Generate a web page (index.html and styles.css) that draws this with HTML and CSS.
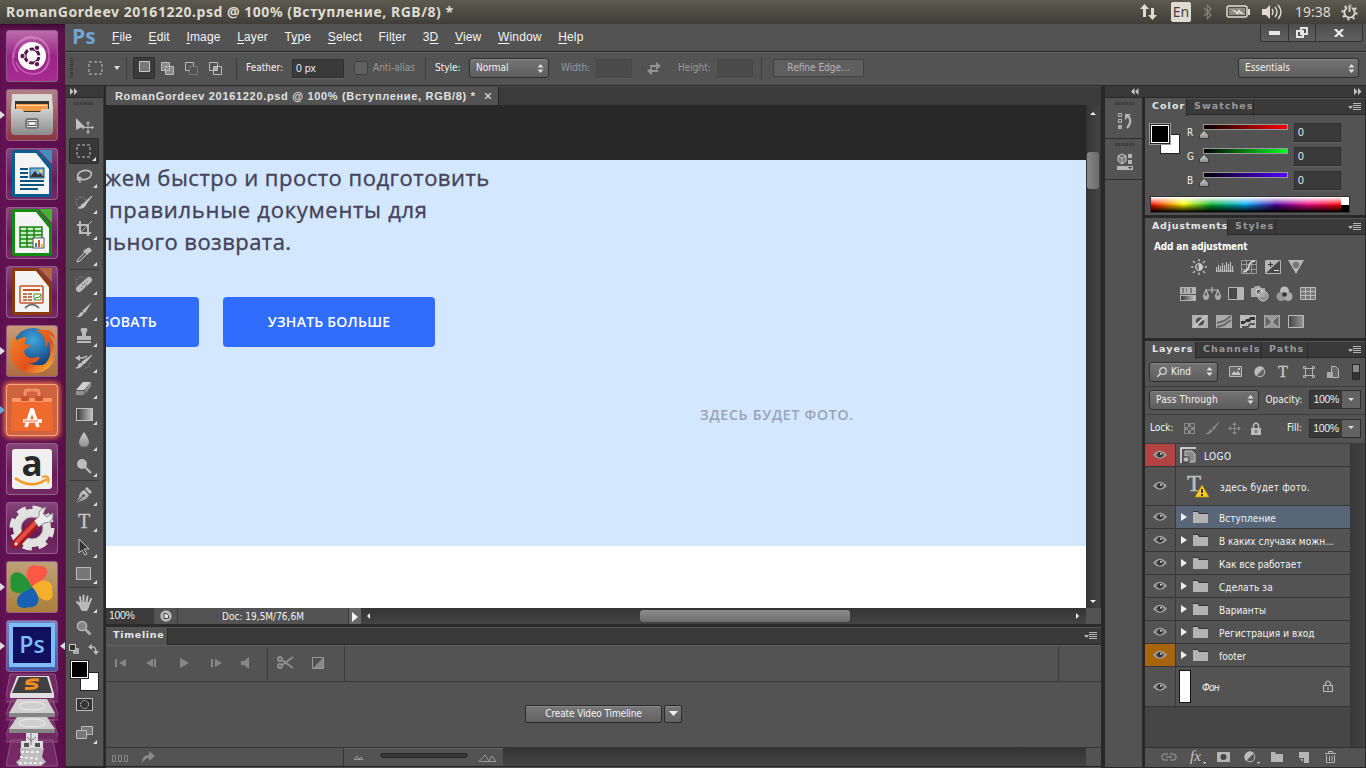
FILE: index.html
```html
<!DOCTYPE html>
<html lang="en">
<head>
<meta charset="utf-8">
<title>RomanGordeev 20161220.psd</title>
<link rel="stylesheet" href="styles.css">
</head>
<body>
<svg width="0" height="0" class="defs">
  <defs>
    <linearGradient id="metal" x1="0" y1="0" x2="0" y2="1"><stop offset="0" stop-color="#d0d0d0"/><stop offset="1" stop-color="#8c8c8c"/></linearGradient>
    <linearGradient id="fade" x1="0" y1="0" x2="1" y2="0"><stop offset="0" stop-color="#3a3a3a"/><stop offset="1" stop-color="#c4c4c4"/></linearGradient>
    <linearGradient id="fadeout" x1="0" y1="0" x2="1" y2="0"><stop offset="0" stop-color="#444"/><stop offset="1" stop-color="#999"/></linearGradient>
    <linearGradient id="fox" x1="0" y1="0" x2="1" y2="1"><stop offset="0" stop-color="#f58a25"/><stop offset=".6" stop-color="#e2501c"/><stop offset="1" stop-color="#ffd53a"/></linearGradient>
    <radialGradient id="globe" cx=".5" cy=".3" r=".7"><stop offset="0" stop-color="#3fa7dd"/><stop offset="1" stop-color="#123a78"/></radialGradient>
    <symbol id="eye" viewBox="0 0 14 10"><path d="M1 5Q7-2 13 5Q7 11 1 5Z" fill="#6b6b6b" stroke="#a5a5a5" stroke-width="1.3"/><circle cx="7" cy="4.8" r="2.7" fill="#343434"/><circle cx="8" cy="3.8" r="1" fill="#ddd"/></symbol>
    <symbol id="folder" viewBox="0 0 15 12"><path d="M0 1h5l1 2h9v9H0z" fill="#b3b3b3"/><path d="M0 .5h5l1 2h9" fill="none" stroke="#333"/></symbol>
    <symbol id="updown" viewBox="0 0 7 9"><path d="M3.500 0L6.500 3.500H.5zM3.500 9L.5 5.500h6z" fill="#dedede"/></symbol>
    <symbol id="flyout" viewBox="0 0 13 9"><path d="M0 3h5L2.500 6z" fill="#bbb"/><path d="M5 .5h8M5 2.500h8M5 4.500h8M5 6.500h8" stroke="#b5b5b5"/></symbol>
    <symbol id="thumb" viewBox="0 0 10 9"><path d="M5 .5L9.500 5v3.500H.5V5z" fill="url(#metal)" stroke="#303030" stroke-width=".8"/></symbol>
  </defs>
</svg>

<header class="topbar">
  <h1 class="topbar-title">RomanGordeev 20161220.psd @ 100% (Вступление, RGB/8) *</h1>
  <svg class="ind ind-net" width="17" height="16" viewBox="0 0 17 16"><path d="M4.500 0L9 5H6v8H3V5H0zM12.500 16L8 11h3V4h3v7h3z" fill="#dfdbd2"/></svg>
  <span class="lang">En</span>
  <svg class="ind-bt" width="9" height="16" viewBox="0 0 9 16"><path d="M1 4l7 7-3.500 3.500v-13L8 5 1 12" fill="none" stroke="#85827a" stroke-width="1.200"/></svg>
  <svg class="ind-bat" width="25" height="14" viewBox="0 0 25 14"><rect x="1" y="1" width="20" height="11" rx="2" fill="none" stroke="#dfdbd2" stroke-width="1.500"/><rect x="3" y="3" width="16" height="7" fill="#8d8a82"/><path d="M22 4h2v6h-2zM5 4l7 3V4l7 6-7-2v2z" fill="#dfdbd2"/></svg>
  <svg class="ind-vol" width="21" height="16" viewBox="0 0 21 16"><path d="M0 5h4l4-4v14l-4-4H0z" fill="#dfdbd2"/><path d="M10 5q2 3 0 6M13 3q4 5 0 10M16 1q6 7 0 14" fill="none" stroke="#dfdbd2" stroke-width="1.400"/></svg>
  <time class="clock">19:38</time>
  <svg width="17" height="17" viewBox="0 0 17 17"><circle cx="8.500" cy="8.500" r="5.200" fill="none" stroke="#dfdbd2" stroke-width="1.800"/><circle cx="8.500" cy="8.500" r="7" fill="none" stroke="#dfdbd2" stroke-width="2" stroke-dasharray="2.200 3.300"/><path d="M6.500 1h4v7h-4z" fill="#4b4942"/><path d="M8.500 1v7" stroke="#dfdbd2" stroke-width="1.800"/></svg>
</header>

<div class="desktop">
<nav class="launcher">
  <div class="tile t-ubuntu"><svg width="52" height="52" viewBox="0 0 52 52"><g fill="none" stroke="#e8a8db" stroke-opacity=".45" stroke-width="1.500"><path d="M8 28C6 4 34 0 43 20M18 8C42 0 52 30 34 43M42 20C50 46 18 52 10 32M12 42C-2 26 14 4 30 9"/></g><circle cx="26" cy="26" r="14" fill="#fff"/><circle cx="26" cy="26" r="7" fill="none" stroke="#5b1650" stroke-width="3" stroke-dasharray="12.700 2" stroke-dashoffset="-1"/><g fill="#5b1650" stroke="#fff"><circle cx="16.500" cy="26" r="2.700"/><circle cx="31" cy="17.800" r="2.700"/><circle cx="31" cy="34.200" r="2.700"/></g></svg></div>
  <div class="tile t-files"><span class="run run-on"></span><svg width="52" height="52" viewBox="0 0 52 52"><path d="M6 5h40l1 16H5z" fill="#d9d9d6"/><path d="M9 12h34v11H9z" fill="#353535"/><path d="M10 15h32v7H10z" fill="#f59a45"/><path d="M10 16.500h31" stroke="#ffd9a4"/><path d="M5 20h11l2 3h16l2-3h11v22q0 4-4 4H9q-4 0-4-4z" fill="url(#metal)"/><rect x="20" y="30" width="12" height="9" rx="2" fill="#eee" stroke="#777" stroke-width="2"/><rect x="22" y="32.500" width="8" height="4" fill="none" stroke="#555"/></svg></div>
  <div class="tile"><svg width="52" height="52" viewBox="0 0 52 52"><path d="M6 4q0-2 3-2h22l15 16v28q0 3-3 3H9q-3 0-3-3z" fill="#075f91"/><path d="M33 2h13v14z" fill="#3f91bf"/><path d="M9 5h21l13 16v25H9z" fill="#f4f4f4"/><path d="M14 21h8M14 25h8M14 29h8M14 33h24M14 37h24M14 41h18" stroke="#07567f" stroke-width="2"/><rect x="24" y="20" width="14" height="10" fill="#7fb3d3" stroke="#07567f"/><path d="M24 29l5-6 3 4 2-2 4 4z" fill="#333"/><circle cx="35" cy="23" r="1.500" fill="#ffe14f"/></svg></div>
  <div class="tile"><svg width="52" height="52" viewBox="0 0 52 52"><path d="M6 4q0-2 3-2h22l15 16v28q0 3-3 3H9q-3 0-3-3z" fill="#148b12"/><path d="M33 2h13v14z" fill="#43b430"/><path d="M9 5h21l13 16v25H9z" fill="#f4f4f4"/><path d="M14 20h22v20H14z" fill="#c8efbd"/><path d="M14 20h22v20H14zM14 24h22M14 28h22M14 32h22M14 36h22M21 20v20M28 20v20" fill="none" stroke="#168216" stroke-width="1.500"/><rect x="27" y="31" width="11" height="10" fill="#fff" stroke="#555"/><path d="M29 40v-4h2v4z" fill="#2785c8"/><path d="M32 40v-7h2v7z" fill="#dd5321"/><path d="M35 40v-3h2v3z" fill="#edbb23"/></svg></div>
  <div class="tile"><svg width="52" height="52" viewBox="0 0 52 52"><path d="M6 4q0-2 3-2h22l15 16v28q0 3-3 3H9q-3 0-3-3z" fill="#8b3a08"/><path d="M33 2h13v14z" fill="#b4663c"/><path d="M9 5h21l13 16v25H9z" fill="#f4f4f4"/><rect x="14" y="20" width="23" height="17" rx="1" fill="#fff7ef" stroke="#bf5420" stroke-width="1.500"/><path d="M17 24h17" stroke="#bf5420" stroke-width="2"/><path d="M17 28h4M17 31h4M17 34h4M22 28h4M22 31h4M22 34h4" stroke="#a34c28" stroke-width="1.500"/><path d="M28 28h7v6h-7zM29 33l2-2 1 1 3-3" fill="none" stroke="#3e8e40"/><path d="M26 37v2M19 42q7-7 14 0" fill="none" stroke="#777" stroke-width="2"/></svg></div>
  <div class="tile t-fox"><span class="run run-on"></span><svg width="52" height="52" viewBox="0 0 52 52"><circle cx="27" cy="23" r="20" fill="url(#globe)"/><path d="M30 5q11 5 9 18 4-4 3-8 6 15-3 24 14-6 10-21 2 30-22 30C12 48 2 36 5 23q0-8 4-13 0 3 2 5 4-3 9-3 0 5-2 7l7 1-7 6q1 7 8 7 5-1 8-1-3 7-12 6 18 7 25-7 4-12-5-22 5 2 7 6 0-6-6-10z" fill="url(#fox)"/></svg></div>
  <div class="tile t-store"><span class="run run-on hollow"></span><svg width="52" height="52" viewBox="0 0 52 52"><path d="M19 17V9q0-3 3-3h8q3 0 3 3v8" fill="none" stroke="#f59068" stroke-width="3"/><path d="M6 14h40l1 33H5z" fill="#ef6a2c"/><path d="M6 14h40v4H6z" fill="#f79865"/><path d="M15 12h8v5h-8zM29 12h8v5h-8z" fill="#c9532f"/><path d="M20 43l5.500-17h1L32 43M17 37h19" fill="none" stroke="#fff" stroke-width="3.500"/><path d="M18 37h14" stroke="#ef6a2c"/></svg></div>
  <div class="tile"><svg width="52" height="52" viewBox="0 0 52 52"><rect x="6" y="6" width="40" height="40" rx="3" fill="#f0f0ef"/><text x="26" y="33" text-anchor="middle" font-family="Open Sans, sans-serif" font-weight="700" font-size="35" fill="#282828">a</text><path d="M9 35q16 12 32 1" fill="none" stroke="#f79a21" stroke-width="2.500"/><path d="M36 34q8-3 6 6" fill="none" stroke="#f79a21" stroke-width="2"/></svg></div>
  <div class="tile"><svg width="52" height="52" viewBox="0 0 52 52"><circle cx="26" cy="26" r="20" fill="none" stroke="#e1e1df" stroke-width="5" stroke-dasharray="9 6.700"/><circle cx="26" cy="26" r="15" fill="none" stroke="#e1e1df" stroke-width="8"/><circle cx="26" cy="26" r="11" fill="none" stroke="#b5b5b3"/><path d="M10 42L31 20" stroke="#a51b1b" stroke-width="9" stroke-linecap="round"/><path d="M11 40L30 20" stroke="#e34d48" stroke-width="4" stroke-linecap="round"/><circle cx="10" cy="42" r="1.500" fill="#fff"/><path d="M28 19l5-5q-1-7 7-9l-3 7 4 3 6-4q1 10-9 10l-5 4z" fill="#ededed" stroke="#8b8b8b"/></svg></div>
  <div class="tile t-clover"><span class="run run-on"></span><svg width="52" height="52" viewBox="0 0 52 52"><path d="M26 26C16 15 22 1 31 5c13-2 16 11-5 21z" fill="#ff5845"/><path d="M26 26c12-12 22-5 20 3 4 13-11 16-20-3z" fill="#f4b02b"/><path d="M26 26c12 12 5 22-3 20-13 5-20-11 3-20z" fill="#1860b4"/><path d="M26 26C14 37 2 31 5 23 1 11 15 3 26 26z" fill="#259437"/></svg></div>
  <div class="tile t-ps"><span class="run run-on"></span><span class="run run-focus"></span><span class="psbox">Ps</span></div>
  <svg class="stack" width="52" height="94" viewBox="0 0 52 94"><g fill="#b673a8" fill-opacity=".25" stroke="#9b6e91" stroke-opacity=".7"><path d="M4 1h45l5 28H-1zM5 27h42l7 20H-2zM5 47h42l7 22H-2zM5 67h42l5 26H0z"/></g><path d="M11 3h32l5 18v4H4v-4z" fill="#dfdfdf"/><path d="M13 4h28l5 16H6z" fill="#404040"/><path d="M33 7q-13-1-12 3.500 10 0 10 2.500-1 3-12 2.500" fill="none" stroke="#f88c20" stroke-width="3"/><path d="M11 26h30l8 14v3H3v-3zM11 44h30l8 12v3H3v-3z" fill="#cfcfcf"/><path d="M3 40h46v4H3zM3 56h46v4H3z" fill="#858585"/><ellipse cx="26" cy="33" rx="13" ry="4" fill="none" stroke="#eee"/><ellipse cx="26" cy="50" rx="13" ry="4" fill="none" stroke="#eee"/><path d="M20 60h12v8h5v7H15v-7h5z" fill="#ddd"/><path d="M25 60v12m-4-8 4 4 5-4" fill="none" stroke="#777"/><path d="M18 70h5v4h-5zM29 70h5v4h-5z" fill="#555"/><path d="M14 75h24l-2 9 4 5-5 4H13l-3-4 5-4z" fill="#bebebe"/><path d="M15 79h20M14 84l20 2M13 90h25" stroke="#eee" stroke-width="2" stroke-dasharray="3 2"/></svg>
</nav>

<main class="app">
  <div class="menubar">
    <span class="pslogo">Ps</span>
    <nav class="menus"><span><u>F</u>ile</span><span><u>E</u>dit</span><span><u>I</u>mage</span><span><u>L</u>ayer</span><span>T<u>y</u>pe</span><span><u>S</u>elect</span><span>Fil<u>t</u>er</span><span>3<u>D</u></span><span><u>V</u>iew</span><span><u>W</u>indow</span><span><u>H</u>elp</span></nav>
    <div class="winbtns">
      <span class="wb wb1"><svg width="11" height="4"><path d="M0 0h11v4H0z" fill="#e6e6e6"/></svg></span>
      <span class="wb wb2"><svg width="12" height="11" viewBox="0 0 12 11"><path d="M5 1h6v6H5zM1 4h6v6H1z" fill="#535353" stroke="#e6e6e6" stroke-width="2"/></svg></span>
      <span class="wb wb3"><svg width="10" height="8" viewBox="0 0 10 8"><path d="M1 0l8 8M9 0L1 8" stroke="#e6e6e6" stroke-width="2.400"/></svg></span>
    </div>
  </div>

  <div class="options">
    <span class="vgrip"></span>
    <svg class="o-marq" width="16" height="14" viewBox="0 0 16 14"><rect x="1" y="1" width="13" height="12" fill="none" stroke="#c2c2c2" stroke-dasharray="3 2"/></svg>
    <svg class="o-caret" width="6" height="4"><path d="M0 0h6L3 4z" fill="#ddd"/></svg>
    <span class="vsep o-s1"></span>
    <span class="modebox"><svg width="11" height="11"><path d="M.5.5h10v10H.5z" fill="#777" stroke="#c9c9c9"/></svg></span>
    <svg class="o-mode m1" width="13" height="13"><path d="M.5.5h8v8h-8zM4.500 4.500h8v8h-8z" fill="#888" stroke="#bcbcbc"/></svg>
    <svg class="o-mode m2" width="13" height="13"><path d="M.5.5h8v8h-8z" fill="none" stroke="#bcbcbc"/><path d="M4.500 4.500h8v8h-8z" fill="#535353" stroke="#777"/></svg>
    <svg class="o-mode m3" width="13" height="13"><path d="M.5.5h8v8h-8zM4.500 4.500h8v8h-8z" fill="none" stroke="#bcbcbc"/><path d="M5 5h3v3H5z" fill="#aaa"/></svg>
    <span class="vsep o-s2"></span>
    <label class="ui o-feather">Feather:</label><span class="field o-f1">0 px</span>
    <span class="check"></span><span class="ui dim o-anti">Anti-alias</span>
    <span class="vsep o-s3"></span>
    <span class="ui o-style">Style:</span>
    <span class="select o-normal">Normal<svg width="7" height="9"><use href="#updown"/></svg></span>
    <span class="ui dim o-w">Width:</span><span class="field off"></span>
    <svg class="o-swap" width="14" height="13" viewBox="0 0 14 13"><path d="M3 3h6V0l5 4-5 4V5H3zM11 8H5V5L0 9l5 4v-3h6z" fill="#929292"/></svg>
    <span class="ui dim o-h">Height:</span><span class="field off"></span>
    <span class="vsep o-s4"></span>
    <span class="button disabled">Refine Edge...</span>
    <span class="select o-ess">Essentials<svg width="7" height="9"><use href="#updown"/></svg></span>
  </div>

  <div class="work">
    <aside class="tools">
      <div class="toolhead"><svg width="8" height="7"><path d="M0 0l3.500 3.500L0 7zM4 0l3.500 3.500L4 7z" fill="#c5c5c5"/></svg></div>
      <div class="grip"><i></i></div>
      <div class="tool nomark"><svg width="20" height="18" viewBox="0 0 20 18"><path d="M2 2l9 9-4 .5L2 14z" fill="#c0c0c0"/><path d="M14 6.500v10M9 11.500h10" stroke="#bbb"/><path d="M14 5l-2 2.500h4zM14 18l-2-2.500h4zM7.500 11.500l2.500-2v4zM20 11.500l-2.500-2v4z" fill="#bbb"/></svg></div>
      <div class="tool active"><svg width="16" height="14"><rect x="1" y="1" width="13" height="12" fill="none" stroke="#c2c2c2" stroke-dasharray="3 2"/></svg></div>
      <div class="tool"><svg width="18" height="16" viewBox="0 0 18 16"><ellipse cx="9.500" cy="6" rx="7" ry="4.500" transform="rotate(-12 9.500 6)" fill="none" stroke="#bbb" stroke-width="1.800"/><path d="M3 8q-2 3 1 3t2-2q-2-2-3 1 2 0 2 4" fill="none" stroke="#bbb" stroke-width="1.300"/></svg></div>
      <div class="tool"><svg width="18" height="16" viewBox="0 0 18 16"><circle cx="6" cy="7" r="5" fill="none" stroke="#aaa" stroke-dasharray="1 1.500"/><path d="M17 1l-6 8-2-1zM11 9q-1 5-8 4 4-1 4-4z" fill="#c3c3c3" stroke="#c3c3c3"/></svg></div>
      <div class="tool"><svg width="17" height="17" viewBox="0 0 17 17"><path d="M4 0v12h11M1 4h11v11" fill="none" stroke="#bbb" stroke-width="2"/><path d="M5 11L16 0" stroke="#bbb"/></svg></div>
      <div class="tool"><svg width="16" height="16" viewBox="0 0 16 16"><path d="M10 2q3-3 5 0t-2 4l-2 2-4-4z" fill="#bbb"/><path d="M9 5L2 12l-1 3 3-1 7-7z" fill="#666" stroke="#c5c5c5"/></svg></div>
      <hr>
      <div class="tool"><svg width="18" height="17" viewBox="0 0 18 17"><circle cx="6" cy="6" r="5" fill="none" stroke="#aaa" stroke-dasharray="1 1.500"/><path d="M4 13L14 4" stroke="#bcbcbc" stroke-width="6" stroke-linecap="round"/><path d="M6 11l1 1M12 5l1 1M7 8l4 3M9 7l3 2" stroke="#555" stroke-dasharray="1 1"/></svg></div>
      <div class="tool"><svg width="18" height="16" viewBox="0 0 18 16"><path d="M17 0l-7 11-3-2zM9 11q-2 5-8 4 3-1 4-4 2-2 4 0z" fill="#bebebe"/></svg></div>
      <div class="tool"><svg width="16" height="16" viewBox="0 0 16 16"><path d="M6 0h4q3 1 0 5v3h5v4H1V8h5V5Q3 1 6 0zM1 13h14v2H1z" fill="#b9b9b9"/></svg></div>
      <div class="tool"><svg width="18" height="16" viewBox="0 0 18 16"><path d="M17 1L9 10l-2-2zM8 9q-1 5-7 5 3-1 3-4z" fill="#c3c3c3" stroke="#c3c3c3"/><path d="M1 4h5q4 0 6-2" fill="none" stroke="#bbb" stroke-width="1.500"/><path d="M0 4l5-3v6z" fill="#bbb"/><path d="M10 14q5 0 5-6" fill="none" stroke="#aaa" stroke-dasharray="1 1.500"/></svg></div>
      <div class="tool"><svg width="18" height="15" viewBox="0 0 18 15"><path d="M8 1h8L9 9H1z" fill="#d0d0d0"/><path d="M1 10h8v4H1zM10 9l6-8v4l-6 8z" fill="#929292"/></svg></div>
      <div class="tool"><svg width="17" height="13"><rect x=".5" y=".5" width="16" height="12" fill="url(#fade)" stroke="#c1c1c1"/></svg></div>
      <div class="tool"><svg width="12" height="16" viewBox="0 0 12 16"><path d="M6 0q5 7 5 10 0 5-5 5T1 10Q1 7 6 0z" fill="url(#metal)"/></svg></div>
      <div class="tool"><svg width="16" height="16" viewBox="0 0 16 16"><circle cx="6" cy="6" r="5" fill="#bcbcbc"/><path d="M9 9l6 6" stroke="#bcbcbc" stroke-width="2.200"/></svg></div>
      <hr>
      <div class="tool"><svg width="18" height="18" viewBox="0 0 18 18"><path d="M9 4l5 5q-2 5-8 6l-5 2 3-6q0-4 5-7z" fill="url(#metal)"/><path d="M10 3l2-2 5 5-2 2z" fill="#c1c1c1"/><path d="M2 16l6-6" stroke="#444"/><circle cx="8.500" cy="9.500" r="1.200" fill="#444"/></svg></div>
      <div class="tool"><span class="typeglyph">T</span></div>
      <div class="tool"><svg width="12" height="18" viewBox="0 0 12 18"><path d="M1 1v14l3-3 3 5 2-1-3-5h5z" fill="#343434" stroke="#c5c5c5"/></svg></div>
      <div class="tool"><svg width="16" height="13"><rect x=".5" y=".5" width="14" height="12" fill="#777" stroke="#bababa"/></svg></div>
      <hr>
      <div class="tool"><svg width="18" height="17" viewBox="0 0 18 17"><path d="M5 11L2 8M6 9L5 3M8.500 8V1.500M11.500 8l1-5.500M14 10l2-5" stroke="#c1c1c1" stroke-width="2" stroke-linecap="round" fill="none"/><path d="M4 8h11q0 5-3 9H7q-3-3-3-9z" fill="#b9b9b9"/></svg></div>
      <div class="tool nomark"><svg width="16" height="16" viewBox="0 0 16 16"><circle cx="6" cy="6" r="4.600" fill="#858585" stroke="#b7b7b7" stroke-width="1.500"/><path d="M9.500 9.500l5 5" stroke="#aaa" stroke-width="3"/></svg></div>
      <div class="swaprow"><svg width="11" height="11"><path d="M4 4h6v6H4z" fill="#aaa"/><path d="M.5.5h6v6h-6z" fill="#333" stroke="#ccc"/></svg><svg width="11" height="11" viewBox="0 0 11 11"><path d="M3 3q5-1 5 5" fill="none" stroke="#bbb" stroke-width="1.300"/><path d="M4 0L0 3l4 3zM5 7h6l-3 4z" fill="#bbb"/></svg></div>
      <div class="swatches"><i class="bg"></i><i class="fg"></i></div>
      <svg class="qmask" width="17" height="13"><rect x=".5" y=".5" width="16" height="12" fill="#333" stroke="#bbb"/><circle cx="8.500" cy="6.500" r="4" fill="none" stroke="#ddd" stroke-dasharray="1.500 1"/></svg>
      <div class="tool screenmode"><svg width="17" height="14"><path d="M5.500.5h11v8h-11z" fill="#777" stroke="#bbb"/><path d="M.5 4.500h10v8H.5z" fill="#777" stroke="#bbb"/></svg></div>
    </aside>

    <section class="docs">
      <div class="doctabs"><div class="doctab"><span>RomanGordeev 20161220.psd @ 100% (Вступление, RGB/8) *</span><svg width="6" height="6"><path d="M0 0l6 6M6 0L0 6" stroke="#d2d2d2" stroke-width="1.500"/></svg></div></div>
      <div class="viewport">
        <div class="canvas">
          <div class="pasteboard"></div>
          <article class="hero">
            <p class="lead"><span class="l1">жем быстро и просто подготовить</span><span class="l2">правильные документы для</span><span class="l3">льного возврата.</span></p>
            <div class="cta"><span class="cta1">ПОПРОБОВАТЬ</span><span class="cta2">УЗНАТЬ БОЛЬШЕ</span></div>
            <p class="photo">ЗДЕСЬ БУДЕТ ФОТО.</p>
          </article>
        </div>
        <div class="vscroll"><svg width="6" height="4"><path d="M3 0l3 3H0z" fill="#eee"/></svg><i></i><svg width="6" height="4"><path d="M0 0h6L3 3z" fill="#eee"/></svg></div>
      </div>
      <div class="status">
        <span class="zoomval">100%</span>
        <span class="stico"><svg width="12" height="12"><circle cx="6" cy="6" r="5.700" fill="#b8b8b8"/><path d="M4 3.500h2.500l2 2V8.500H4z" fill="#ddd" stroke="#444"/></svg></span>
        <span class="docsize ui">Doc: 19,5M/76,6M</span>
        <span class="stplay"><svg width="6" height="10"><path d="M0 0l6 5-6 5z" fill="#f1f1f1"/></svg></span>
        <span class="hscroll"><svg width="4" height="6"><path d="M3 0v6L0 3z" fill="#eee"/></svg><i></i><svg width="4" height="6"><path d="M0 0l3 3-3 3z" fill="#eee"/></svg></span>
        <span class="corner"></span>
      </div>
      <div class="tltabs"><span class="ptab on">Timeline</span><svg class="fly" width="13" height="9"><use href="#flyout"/></svg></div>
      <div class="tlbar">
        <svg width="240" height="36" viewBox="0 0 240 36" fill="#878787"><path d="M9 13h2v8H9zM20 13v8l-7-4zM47 13v8l-7-4zM48 13h2v8h-2zM74 12l9 5-9 5zM105 13h2v8h-2zM109 13l7 4-7 4zM135 15h3l5-4v12l-5-4h-3z"/><g fill="none" stroke="#909090" stroke-width="1.800"><circle cx="174" cy="13" r="2"/><circle cx="174" cy="20" r="2"/><path d="M176 14l11 8M176 19l11-8"/></g><path d="M206.500 11.500h11v11h-11z" fill="#505050" stroke="#9a9a9a"/><path d="M217 12v10h-10z"/><path d="M161 2h1v32h-1zM238 0h1v36h-1z" fill="#3c3c3c"/></svg>
      </div>
      <div class="tlbody"><span class="button create">Create Video Timeline</span><span class="button drop"><svg width="9" height="6"><path d="M0 0h9L4.500 5z" fill="#eee"/></svg></span></div>
      <div class="tlfoot">
        <svg width="237" height="18"><path d="M6.500 7.500h3v6h-3zM12.500 7.500h3v6h-3zM18.500 7.500h3v6h-3z" fill="none" stroke="#888"/><path d="M36 15q0-8 7-8V3l6 5-6 5v-3q-4 0-7 5z" fill="#8b8b8b"/></svg>
        <div class="tlzoom"><svg width="9" height="5"><path d="M0 4.500L3 1l2 3 2-2 2 2.500z" fill="none" stroke="#999"/></svg><i></i><svg width="17" height="9"><path d="M0 8.500L6 2l4 6 3-5 4 5.500z" fill="none" stroke="#999"/></svg></div>
        <span class="tlscroll"></span>
      </div>
    </section>

    <section class="side">
      <div class="sidehead"><svg class="rh1" width="8" height="7"><path d="M3.500 0v7L0 3.500zM7.500 0v7L4 3.500z" fill="#c5c5c5"/></svg><svg width="8" height="7"><path d="M0 0l3.500 3.500L0 7zM4 0l3.500 3.500L4 7z" fill="#c5c5c5"/></svg></div>
      <div class="sidebody">
        <div class="dock">
          <div class="dockgrp"><div class="grip"><i></i></div><svg width="16" height="18" viewBox="0 0 16 18"><path d="M1.500 1.500h3v3h-3zM1.500 7.500h3v3h-3z" fill="none" stroke="#bbb"/><path d="M1 13h4v4H1z" fill="#aaa"/><path d="M8 2h6l-6 6z" fill="#b5b5b5"/><path d="M11 4q5 5-1 12" fill="none" stroke="#b5b5b5" stroke-width="2.200"/></svg></div>
          <div class="dockgrp"><div class="grip"><i></i></div><svg width="16" height="17" viewBox="0 0 16 17"><path d="M5 1l4 2v5l-4 3-4-3V3zM1 3l4 2 4-2M5 5v6" fill="#777" stroke="#c5c5c5"/><path d="M11 1h4v4h-4zM11 7h4v4h-4zM0 13h16v4H0z" fill="#b5b5b5"/><path d="M11 14h4l-2 2z" fill="#333"/></svg></div>
        </div>
        <div class="panels">
          <div class="panel">
            <div class="tabs"><span class="ptab on c1">Color</span><span class="ptab c2">Swatches</span><svg class="fly" width="13" height="9"><use href="#flyout"/></svg></div>
            <div class="colorbody">
              <div class="colormain">
                <div class="csw"><i class="bg"></i><i class="fg"></i></div>
                <div class="sliders">
                  <div class="sl"><b>R</b><div class="track"><i class="red"></i><svg width="10" height="9"><use href="#thumb"/></svg></div><span class="field">0</span></div>
                  <div class="sl"><b>G</b><div class="track"><i class="green"></i><svg width="10" height="9"><use href="#thumb"/></svg></div><span class="field">0</span></div>
                  <div class="sl"><b>B</b><div class="track"><i class="blue"></i><svg width="10" height="9"><use href="#thumb"/></svg></div><span class="field">0</span></div>
                </div>
              </div>
              <div class="spectrum"><i></i><em></em></div>
            </div>
          </div>
          <div class="panel adj">
            <div class="tabs"><span class="ptab on a1">Adjustments</span><span class="ptab a2">Styles</span><svg class="fly" width="13" height="9"><use href="#flyout"/></svg></div>
            <div class="adjbody">
              <p>Add an adjustment</p>
              <div class="adjrow r1">
                <svg width="18" height="16" viewBox="0 0 18 16"><circle cx="9" cy="8" r="3.500" fill="#777" stroke="#ccc"/><path d="M9 4.500a3.500 3.500 0 010 7z" fill="#ccc"/><path d="M9 0v2.500M9 13.500V16M1 8h2.500M14.500 8H17M3 2l2 2M13 12l2 2M15 2l-2 2M5 12l-2 2" stroke="#bbb" stroke-width="1.500"/></svg>
                <svg width="18" height="16"><path d="M.5 13V8m2 5V6m2 7V7m2 6V4m2 9V6m2 7V3m2 10V5m2 8V3m2 10V7M0 12h18" stroke="#bbb" stroke-width="1.200"/></svg>
                <svg width="16" height="16"><path d="M.5 1.500h15v13H.5zM5.500 1v13M10.500 1v13M0 5.500h15M0 10.500h15" fill="none" stroke="#999"/><path d="M2 13q5-1 6-6t6-5" fill="none" stroke="#ddd" stroke-width="1.500"/></svg>
                <svg width="16" height="16"><path d="M.5 1.500h15v13H.5z" fill="#484848" stroke="#b5b5b5"/><path d="M1 14V2h13z" fill="#b5b5b5"/><path d="M3 5.500h5M5.500 3v5" stroke="#333"/><path d="M9 11.500h5" stroke="#ddd"/></svg>
                <svg width="16" height="16"><path d="M0 1h16L8 15z" fill="#b7b7b7"/><circle cx="8" cy="6" r="3.200" fill="#777"/></svg>
              </div>
              <div class="adjrow r2">
                <svg width="16" height="14"><path d="M0 0h16v14H0z" fill="#b3b3b3"/><path d="M2 1h2v5H2zM6 1h1v5H6zM10 1h2v5h-2z" fill="#777"/><path d="M0 7h16v1H0z" fill="#555"/><path d="M1 9h14v4H1z" fill="url(#fade)"/></svg>
                <svg width="18" height="15"><path d="M3 3h12M9 0v6M3 3L.5 9h5zM15 3l-2.500 6h5z" fill="none" stroke="#bbb" stroke-width="1.200"/><path d="M0 9h6q0 4-3 4T0 9zM12 9h6q0 4-3 4t-3-4z" fill="#aaa"/></svg>
                <svg width="16" height="14"><path d="M.5.5h15v12H.5z" fill="#484848" stroke="#b5b5b5"/><path d="M9 1h6v12H9z" fill="#b5b5b5"/></svg>
                <svg width="18" height="16"><path d="M0 2h3l1-2h5l1 2h4v9H0z" fill="#aaa"/><circle cx="8" cy="6" r="3" fill="#666" stroke="#ddd"/><circle cx="12" cy="10" r="5" fill="#aaa" fill-opacity=".7" stroke="#ccc"/></svg>
                <svg width="17" height="16"><circle cx="8.500" cy="5" r="4.500" fill="#bbb"/><circle cx="5" cy="10.500" r="4.500" fill="#999"/><circle cx="12" cy="10.500" r="4.500" fill="#aaa"/><circle cx="8.500" cy="8.500" r="2.300" fill="#333"/></svg>
                <svg width="16" height="14"><path d="M.5.5h15v12H.5zM5.500 0v13M10.500 0v13M0 4.500h16M0 8.500h16" fill="#777" stroke="#bbb"/></svg>
              </div>
              <div class="adjrow r3">
                <svg width="16" height="13"><path d="M0 0h16v13H0z" fill="#b1b1b1"/><circle cx="8" cy="6.500" r="4" fill="#484848"/><path d="M2 12L14 1" stroke="#ccc" stroke-width="2"/></svg>
                <svg width="16" height="13"><path d="M0 0h16v13H0z" fill="#aaa"/><path d="M1 8l7-2 7-5M1 12l7-2 7-5" fill="none" stroke="#666" stroke-width="2"/></svg>
                <svg width="16" height="13"><path d="M0 0h16v13H0z" fill="#bbb"/><path d="M1 6h4l1-2h3l1-2h5v3h-4l-1 2H6L4 9H1z" fill="#333"/><path d="M2 12h6l2-3h5" fill="none" stroke="#555" stroke-width="2"/></svg>
                <svg width="16" height="13"><path d="M0 0h16v13H0z" fill="#999"/><path d="M1 0l7 7-7 6zM15 0L8 7l7 6z" fill="#666" stroke="#bbb" stroke-width=".8"/></svg>
                <svg width="16" height="13"><path d="M.5.5h15v12H.5z" fill="url(#fadeout)" stroke="#bbb"/></svg>
              </div>
            </div>
          </div>
          <div class="panel layers">
            <div class="tabs"><span class="ptab on y1">Layers</span><span class="ptab y2">Channels</span><span class="ptab y3">Paths</span><svg class="fly" width="13" height="9"><use href="#flyout"/></svg></div>
            <div class="filterrow">
              <span class="select kind"><svg width="10" height="10"><circle cx="6" cy="4" r="3.300" fill="none" stroke="#d5d5d5" stroke-width="1.300"/><path d="M3.500 6.500L0 10" stroke="#d5d5d5" stroke-width="1.500"/></svg><span>Kind</span><svg width="7" height="9"><use href="#updown"/></svg></span>
              <svg class="f1" width="13" height="11"><path d="M.5.500h12v10H.5z" fill="#666" stroke="#b9b9b9"/><path d="M2 9l3-4 2 2 2-2 3 4zM9 2h2v2H9z" fill="#c5c5c5"/></svg>
              <svg class="f2" width="12" height="12"><circle cx="6" cy="6" r="4.800" fill="#666" stroke="#bbb"/><path d="M2 10L10 2a5.500 5.500 0 00-8 8z" fill="#bbb"/></svg>
              <span class="typeglyph small">T</span>
              <svg class="f4" width="12" height="12"><path d="M2.500 2.500h7v7h-7z" fill="none" stroke="#b3b3b3"/><path d="M.5.500h2v2h-2zM9.500.500h2v2h-2zM.5 9.500h2v2h-2zM9.500 9.500h2v2h-2z" fill="#555" stroke="#b3b3b3"/></svg>
              <svg class="f5" width="12" height="12"><path d="M4.500.500h4l3 3v8h-7z" fill="#666" stroke="#bbb"/><path d="M0 6h6v6H0z" fill="#aaa"/></svg>
              <i class="switch"></i>
            </div>
            <div class="blendrow"><span class="select pass">Pass Through<svg width="7" height="9"><use href="#updown"/></svg></span><span class="ui op">Opacity:</span><span class="combo"><b>100%</b><i><svg width="6" height="4"><path d="M0 0h6L3 3z" fill="#ddd"/></svg></i></span></div>
            <div class="lockrow"><span class="ui lk">Lock:</span>
              <svg class="k1" width="11" height="11"><path d="M0 0h11v11H0z" fill="#888"/><path d="M1 1h3v3H1zM7 1h3v3H7zM4 4h3v3H4zM1 7h3v3H1zM7 7h3v3H7z" fill="#555"/></svg>
              <svg class="k2" width="16" height="14"><path d="M15 0L9 9 7 7zM8 9q-2 5-8 4 4-1 5-5z" fill="#8b8b8b"/></svg>
              <svg class="k3" width="13" height="13"><path d="M6.500 1v11M1 6.500h11" stroke="#888"/><path d="M6.500 0L4 3h5zM6.500 13L4 10h5zM0 6.500L3 4v5zM13 6.500L10 4v5z" fill="#888"/></svg>
              <svg class="k4" width="10" height="13"><path d="M2.500 6V3q2.500-4 5 0v3" fill="none" stroke="#bbb" stroke-width="1.500"/><path d="M0 6h10v7H0z" fill="#bbb"/><path d="M5 8v3" stroke="#333"/></svg>
              <span class="ui fl">Fill:</span><span class="combo"><b>100%</b><i><svg width="6" height="4"><path d="M0 0h6L3 3z" fill="#ddd"/></svg></i></span></div>
            <div class="listwrap">
              <div class="list">
                <div class="row"><span class="eye redbg"><svg width="14" height="10"><use href="#eye"/></svg></span><svg class="smart" width="16" height="16"><path d="M1 16V1h15" fill="none" stroke="#eee" stroke-width="1.500"/><path d="M5 4h7l3 3v8H8V9H5z" fill="#8b8b8b" stroke="#c5c5c5"/><path d="M3 10h6v5H3z" fill="#bbb" stroke="#333"/></svg><span class="nm n-logo">LOGO</span></div>
                <div class="row tall"><span class="eye"><svg width="14" height="10"><use href="#eye"/></svg></span><svg class="warn" width="22" height="24"><text x="0" y="17" font-family="Liberation Serif, serif" font-size="23" fill="#c0c0c0" stroke="#c0c0c0" stroke-width=".5">T</text><path d="M15 11l7 12H8z" fill="#f8cb28" stroke="#c48b0c" stroke-width=".7"/><path d="M15 15v4M15 20v2" stroke="#222" stroke-width="1.700"/></svg><span class="nm n-photo">здесь будет фото.</span></div>
                <div class="row sel"><span class="eye"><svg width="14" height="10"><use href="#eye"/></svg></span><i class="tri"></i><svg width="15" height="12"><use href="#folder"/></svg><span class="nm">Вступление</span></div>
                <div class="row"><span class="eye"><svg width="14" height="10"><use href="#eye"/></svg></span><i class="tri"></i><svg width="15" height="12"><use href="#folder"/></svg><span class="nm n-cases">В каких случаях можн...</span></div>
                <div class="row"><span class="eye"><svg width="14" height="10"><use href="#eye"/></svg></span><i class="tri"></i><svg width="15" height="12"><use href="#folder"/></svg><span class="nm n-cases">Как все работает</span></div>
                <div class="row"><span class="eye"><svg width="14" height="10"><use href="#eye"/></svg></span><i class="tri"></i><svg width="15" height="12"><use href="#folder"/></svg><span class="nm">Сделать за</span></div>
                <div class="row"><span class="eye"><svg width="14" height="10"><use href="#eye"/></svg></span><i class="tri"></i><svg width="15" height="12"><use href="#folder"/></svg><span class="nm n-cases">Варианты</span></div>
                <div class="row"><span class="eye"><svg width="14" height="10"><use href="#eye"/></svg></span><i class="tri"></i><svg width="15" height="12"><use href="#folder"/></svg><span class="nm">Регистрация и вход</span></div>
                <div class="row"><span class="eye orangebg"><svg width="14" height="10"><use href="#eye"/></svg></span><i class="tri"></i><svg width="15" height="12"><use href="#folder"/></svg><span class="nm n-cases">footer</span></div>
                <div class="row tall bgrow"><span class="eye"><svg width="14" height="10"><use href="#eye"/></svg></span><i class="pic"></i><span class="nm n-bg">Фон</span><svg class="lock" width="10" height="13"><path d="M2.500 6V3q2.500-4 5 0v3M.5 5.500h9v6h-9zM5 7v3" fill="none" stroke="#bbb" stroke-width="1.200"/></svg></div>
              </div>
              <div class="listscroll"></div>
            </div>
            <div class="lfoot">
              <svg width="210" height="18" viewBox="0 0 210 18"><g fill="none" stroke="#858585" stroke-width="1.500"><path d="M23 6h-3q-3 0-3 3t3 3h3M25 6h3q3 0 3 3t-3 3h-3M21 9h6"/></g><text x="45" y="13" font-family="Liberation Serif, serif" font-style="italic" font-size="15" fill="#c5c5c5">fx</text><path d="M58 14h3l-1.500 2zM112 14h3l-1.500 2z" fill="#ddd"/><path d="M72 4h13v10H72z" fill="#b5b5b5"/><circle cx="78.500" cy="9" r="3" fill="#444"/><circle cx="105" cy="9" r="4.800" fill="#555" stroke="#bbb"/><path d="M101 13l8-8a5.500 5.500 0 00-8 8z" fill="#bbb"/><path d="M126 4h4l1 2h7v8h-12z" fill="#b5b5b5"/><path d="M154 4h10v11h-5v-5h-5z" fill="#b5b5b5"/><path d="M155 11h3v3z" fill="#b5b5b5"/><path d="M180 5.500h11M183.500 5V3.500h4V5M181.500 7v7.500h8V7M184.500 8v5M187 8v5" fill="none" stroke="#b5b5b5"/></svg>
            </div>
          </div>
        </div>
      </div>
    </section>
  </div>
</main>
</div>
</body>
</html>
```

FILE: styles.css
```css
* { box-sizing: border-box; }
body { margin: 0; width: 1366px; height: 768px; overflow: hidden; background: #282828; font-family: "DejaVu Sans Condensed", "DejaVu Sans", sans-serif; font-size: 10px; color: #eee; }
svg { display: block; flex: none; }
i, em { display: block; font-style: normal; }
.defs { position: absolute; }
.topbar { height: 24px; display: flex; align-items: center; padding: 0 8px 0 6px; background: linear-gradient(#5d5b4e, #3f3e39); }
.topbar-title { margin: 0; flex: 1; font: 700 14px/24px "Noto Sans", sans-serif; color: #dfdbd2; white-space: nowrap; letter-spacing: .53px; }
.ind-net { margin-right: 14px; }
.lang { width: 20px; height: 20px; margin-right: 12px; border-radius: 2px; background: #dfdbd2; color: #45433e; font: 14px/20px "Noto Sans", sans-serif; text-align: center; }
.ind-bt { margin-right: 14px; }
.ind-bat { margin-right: 11px; }
.ind-vol { margin-right: 12px; }
.clock { width: 38px; margin-right: 8px; font: 14px/24px "Noto Sans", sans-serif; color: #dfdbd2; white-space: nowrap; }
.desktop { display: flex; height: 744px; }

.launcher { width: 65px; padding: 6px 0 0 6px; background: linear-gradient(90deg, #631253, #5b0f4c); display: flex; flex-direction: column; gap: 7px; box-shadow: inset 0 4px 4px -2px #350a2c; }
.tile { position: relative; width: 52px; height: 52px; flex: none; border-radius: 4px; background: linear-gradient(#85467a, #671c58 60%, #732c66); box-shadow: inset 0 0 0 1px #92608a; }
.t-ubuntu { background: linear-gradient(#bb70ae, #9b2386 50%, #a72c92); }
.t-files { background: linear-gradient(#b38286, #8b343c); }
.t-fox { background: linear-gradient(#c99c77, #ad6c3e); }
.t-store { background: #ce6340; box-shadow: 0 0 5px 2px #e97345, inset 0 0 0 1px #ffa57d; }
.t-clover { background: linear-gradient(#bda27a, #aa7f39); }
.t-ps { background: linear-gradient(#7187c6, #3f58ac); padding: 3px; }
.psbox { display: block; width: 46px; height: 44px; border: 4px solid #7fbcf8; background: #10105e; font: 600 23px/35px "Open Sans", sans-serif; color: #7fbcf8; text-align: center; }
.run { position: absolute; top: 22px; width: 0; height: 0; border: 4px solid transparent; }
.run-on { left: -6px; border-left: 5px solid #ddd; border-right: 0; }
.run-focus { right: -7px; border-right: 5px solid #ddd; border-left: 0; }
.hollow { border-left-color: #61a9d4; }
.stack { margin-top: -6px; }

.app { flex: 1; min-width: 0; display: flex; flex-direction: column; background: #535353; }
.menubar { height: 28px; display: flex; border-bottom: 1px solid #262626; padding-left: 7px; }
.pslogo { width: 40px; font: 700 21px/24px "Open Sans", sans-serif; color: #72a4d4; }
.menus { flex: 1; display: flex; gap: 16.600px; font: 12px/26px "Liberation Sans", Arial, sans-serif; letter-spacing: .15px; color: #f4f4f4; }
.menus u { text-underline-offset: 2px; }
.winbtns { display: flex; height: 18px; margin-right: 3px; border: 1px solid #333; border-top: 0; border-radius: 0 0 3px 3px; background: linear-gradient(#4e4e4e, #5f5f5f); }
.wb { display: flex; align-items: center; justify-content: center; border-left: 1px solid #333; }
.wb1 { width: 27px; border-left: 0; } .wb2 { width: 27px; } .wb3 { width: 47px; }

.options { height: 34px; display: flex; align-items: center; border-top: 1px solid #666; border-bottom: 1px solid #292929; padding: 0 0 2px 5px; }
.options > * { flex: none; }
.vgrip { width: 3px; height: 20px; background: repeating-linear-gradient(#353535 0 1px, #535353 1px 2px); }
.o-marq { margin-left: 15px; } .o-caret { margin-left: 10px; }
.vsep { width: 1px; height: 23px; background: #3c3c3c; }
.o-s1 { margin-left: 6px; }
.modebox { width: 22px; height: 22px; margin-left: 6px; background: #3b3b3b; border: 1px solid #2e2e2e; border-radius: 2px; display: flex; align-items: center; justify-content: center; padding-bottom: 3px; }
.m1 { margin-left: 6px; } .m2, .m3 { margin-left: 11px; }
.o-s2 { margin-left: 14px; }
.ui, .select, .button, .nm { font: 10px/14px "DejaVu Sans Condensed", "DejaVu Sans", sans-serif; color: #f2f2f2; white-space: nowrap; }
.ui.dim { color: #9b9b9b; }
.o-feather { margin-left: 9px; width: 46px; }
.field { height: 19px; background: #3a3a3a; border: 1px solid #303030; box-shadow: 0 1px 0 #666; font: 10.500px/17px "Liberation Sans", Arial, sans-serif; color: #eee; padding-left: 3px; }
.o-f1 { width: 52px; }
.check { width: 14px; height: 14px; margin-left: 10px; border: 1px solid #414141; border-radius: 2px; background: #606060; }
.o-anti { margin-left: 5px; width: 52px; }
.o-style { margin-left: 9px; width: 34px; }
.select { display: flex; justify-content: space-between; align-items: center; height: 20px; border: 1px solid #2f2f2f; border-radius: 3px; background: linear-gradient(#747474, #5d5d5d); box-shadow: inset 0 1px 0 #858585; padding: 0 4px 0 6px; }
.o-normal { width: 80px; }
.o-w { margin-left: 12px; width: 35px; }
.field.off { width: 36px; background: #4b4b4b; border-color: #474747; box-shadow: 0 1px 0 #5d5d5d; }
.o-swap { margin-left: 15px; } .o-h { margin-left: 17px; width: 39px; } .o-s4 { margin-left: 8px; }
.button { display: flex; align-items: center; justify-content: center; height: 18px; border: 1px solid #292929; border-radius: 2px; background: linear-gradient(#777, #626262); box-shadow: inset 0 1px 0 #8b8b8b; }
.button.disabled { width: 91px; margin-left: 11px; color: #b4b4b4; background: #5f5f5f; border-color: #414141; box-shadow: none; }
.options > .o-ess { width: 121px; margin-left: auto; margin-right: 7px; padding-right: 3px; }
.o-s3 { margin-left: 0; }

.work { height: 682px; display: flex; background: #282828; }
.tools { width: 39px; margin-right: 2px; height: 680px; padding-right: 1px; background: #535353; border-left: 1px solid #333; border-right: 1px solid #363636; display: flex; flex-direction: column; align-items: center; }
.toolhead { align-self: stretch; height: 12px; margin-right: -1px; background: #3a3a3a; border-bottom: 1px solid #282828; padding: 2px 4px; }
.grip { height: 14px; padding-top: 4px; align-self: center; }
.grip i { width: 20px; height: 3px; background: repeating-linear-gradient(90deg, #333 0 1px, #535353 1px 2px); }
.tool { position: relative; width: 30px; height: 26px; display: flex; align-items: center; justify-content: center; }
.tool::after { content: ""; position: absolute; right: 2px; bottom: 2px; border: 2px solid #ddd; border-top-color: transparent; border-left-color: transparent; }
.tool.nomark::after { display: none; }
.active { background: #383838; border: 1px solid #2c2c2c; border-radius: 2px; }
.tools hr { width: 29px; height: 1px; margin: 1px 0 1px; border: 0; background: #3a3a3a; }
.typeglyph { font: 20px/20px "Liberation Serif", serif; color: #c8c8c8; -webkit-text-stroke: .3px #c8c8c8; }
.swaprow { height: 13px; width: 30px; display: flex; justify-content: space-between; margin-top: 3px; }
.swatches { position: relative; width: 29px; height: 31px; margin-top: 3px; }
.swatches i { position: absolute; width: 19px; height: 19px; border: 1px solid #222; }
.fg { left: 0; top: 0; background: #000; box-shadow: inset 0 0 0 1px #fff; }
.swatches .bg { right: 0; bottom: 0; background: #fff; }
.swatches .fg { left: 0; top: 0; }
.qmask { margin-top: 7px; } .screenmode { margin-top: 9px; }

.docs { width: 996px; flex: none; display: flex; flex-direction: column; background: #535353; border-right: 1px solid #282828; }
.doctabs { height: 19px; background: #3b3b3b; border-top: 1px solid #4a4a4a; }
.doctab { width: 393px; height: 18px; background: #535353; border-right: 1px solid #292929; display: flex; align-items: center; padding-left: 9px; }
.doctab span { width: 370px; font: 700 11px/18px "Liberation Sans", Arial, sans-serif; color: #e0e0e0; white-space: nowrap; letter-spacing: .68px; }
.viewport { height: 503px; display: flex; }
.canvas { width: 980px; flex: none; background: #fff; overflow: hidden; }
.pasteboard { height: 55px; background: #282828; }
.hero { height: 386px; background: #d3e7ff; overflow: hidden; }
.lead { margin: 1px 0 0; font: 500 22px/32px "Open Sans", sans-serif; color: #454259; -webkit-text-stroke: .35px #454259; white-space: nowrap; }
.lead span { display: block; }
.l1 { margin-left: -1px; letter-spacing: .5px; } .l2 { margin-left: 3px; letter-spacing: .72px; } .l3 { margin-left: -6px; letter-spacing: .45px; }
.cta { display: flex; gap: 24px; margin-top: 40px; font: 600 14px/50px "Open Sans", sans-serif; color: #fff; white-space: nowrap; letter-spacing: .25px; }
.cta1 { width: 93px; height: 50px; background: #306dff; border-radius: 0 4px 4px 0; display: flex; justify-content: flex-end; padding-right: 42px; }
.cta2 { width: 212px; background: #306dff; border-radius: 4px; text-align: center; }
.photo { margin: 58px 0 0 594px; font: 600 14px/20px "Open Sans", sans-serif; color: #98a3b8; letter-spacing: .78px; white-space: nowrap; }
.vscroll { width: 15px; background: linear-gradient(90deg, #343434, #444); border-right: 1px solid #333; display: flex; flex-direction: column; align-items: center; padding: 7px 0 4px; }
.vscroll i { width: 12px; height: 37px; margin: 36px 0 auto; border-radius: 3px; background: linear-gradient(90deg, #858585, #6c6c6c); }
.status { height: 16px; display: flex; background: #535353; }
.status > * { flex: none; }
.zoomval { width: 48px; padding-left: 3px; background: #3b3b3b; font: 10.500px/15px "Liberation Sans", Arial, sans-serif; letter-spacing: -.3px; }
.stico { width: 24px; padding: 2px 6px; border-right: 1px solid #393939; }
.docsize { width: 171px; text-align: center; border-right: 1px solid #393939; line-height: 17px; }
.stplay { width: 12px; padding: 4px 3px; background: #666; }
.hscroll { width: 725px; padding: 0 6px 0 6px; background: linear-gradient(#343434, #444); display: flex; align-items: center; }
.hscroll i { width: 210px; height: 12px; margin: 0 auto 0 269px; border-radius: 3px; background: linear-gradient(#8c8c8c, #6d6d6d); }
.tltabs, .tabs { display: flex; background: #3a3a3a; border-top: 1px solid #555; }
.tltabs { height: 18px; margin-top: 3px; border-bottom: 1px solid #292929; }
.status { box-shadow: 0 3px 0 #2b2b2b; }
.ptab { height: 17px; border-right: 1px solid #292929; font: 700 9.500px/14px "DejaVu Sans", sans-serif; color: #999; padding-left: 7px; white-space: nowrap; letter-spacing: 1.050px; }
.ptab.on { background: #535353; color: #e5e5e5; }
.tltabs .ptab { width: 62px; letter-spacing: .7px; }
.fly { margin: 4px 4px 0 auto; }
.tlbar { height: 37px; background: #535353; border-top: 1px solid #626262; border-bottom: 1px solid #3a3a3a; display: flex; }
.tlbar::after { content: ""; width: 42px; margin-left: auto; border-left: 1px solid #3c3c3c; }
.tlbody { height: 65px; background: #535353; display: flex; padding: 23px 0 0 419px; }
.create { width: 137px; letter-spacing: -.12px; } .drop { width: 18px; margin-left: 2px; }
.tlfoot { height: 20px; background: #535353; border-top: 1px solid #333; border-bottom: 1px solid #242424; display: flex; }
.tlzoom { width: 160px; border-left: 1px solid #333; border-top: 1px solid #626262; display: flex; align-items: center; padding-left: 10px; }
.tlzoom i { width: 88px; height: 5px; margin: -5px 11px 0 17px; border: 1px solid #262626; border-radius: 3px; background: #393939; }
.tlscroll { width: 583px; background: linear-gradient(#343434, #444); }

.side { width: 262px; margin-left: 2px; flex: none; background: #282828; }
.sidehead { height: 12px; margin-left: 1px; background: #393939; border-bottom: 1px solid #282828; display: flex; justify-content: space-between; padding: 2px 4px 0 26px; }
.sidebody { display: flex; height: 669px; }
.dock { width: 37px; margin: 0 3px 0 1px; background: #535353; }
.dockgrp { height: 41px; border-bottom: 1px solid #2d2d2d; padding-left: 3px; display: flex; flex-direction: column; align-items: center; }
.panels { width: 221px; display: flex; flex-direction: column; gap: 3px; padding-right: 1px; }
.panel { background: #535353; }
.tabs { height: 17px; border-bottom: 1px solid #292929; }
.c1 { width: 42px; } .c2 { width: 67px; }
.a1 { width: 83px; } .a2 { width: 48px; }
.ptab.a1 { letter-spacing: .75px; }
.y1 { width: 51px; } .y2 { width: 66px; } .y3 { width: 46px; }
.colorbody { height: 100px; padding: 8px 5px 0; }
.colormain { display: flex; height: 73px; }
.csw { position: relative; width: 37px; }
.csw i { position: absolute; width: 20px; height: 20px; border: 1px solid #222; }
.csw .bg { left: 10px; top: 11px; background: #fff; } .csw .fg { left: 0; top: 1px; box-shadow: inset 0 0 0 1px #fff, 0 0 0 1px #999; }
.sl { display: flex; height: 24px; }
.sl b { width: 12px; font: 10px/19px "DejaVu Sans Condensed", sans-serif; }
.track { width: 90px; padding-top: 1px; }
.track i { width: 85px; height: 6px; margin-left: 4px; border: 1px solid #999; }
.track svg { margin-top: 0; }
.red { background: linear-gradient(90deg, #000, #f00); } .green { background: linear-gradient(90deg, #000, #0f2); } .blue { background: linear-gradient(90deg, #000, #50f); }
.sl .field { width: 47px; margin-left: 5px; }
.spectrum { width: 200px; height: 17px; border: 1px solid #333; display: flex; }
.spectrum i { width: 190px; background: linear-gradient(#fff, transparent 55%), linear-gradient(transparent 45%, #000), linear-gradient(90deg, #f00, #ff0 17%, #00b332 32%, #00aaf5 50%, #50009b 66%, #f00a82 83%, #f00); }
.spectrum em { width: 8px; background: linear-gradient(#fff 50%, #000 50%); }
.adjbody { height: 103px; }
.adjbody p { margin: 0; padding: 5px 0 0 9px; font: 700 10px/14px "DejaVu Sans Condensed", sans-serif; letter-spacing: -.18px; color: #fff; }
.adjrow { display: flex; gap: 8px; align-items: center; }
.r1 { padding-left: 45px; margin-top: 5px; gap: 7.500px; } .r2 { padding-left: 35px; margin-top: 11px; gap: 7px; } .r3 { padding-left: 47px; margin-top: 13px; }
.filterrow { height: 29px; border-bottom: 1px solid #3c3c3c; display: flex; align-items: center; padding: 0 5px 1px 4px; }
.kind { width: 69px; padding-left: 7px; } .kind span { margin-right: 11px; }
.f1 { margin-left: 11px; } .f2 { margin-left: 12px; }
.typeglyph.small { font-size: 16px; width: 12px; margin-left: 12px; }
.f4 { margin-left: 13px; } .f5 { margin-left: 12px; }
.switch { width: 8px; height: 16px; margin-left: auto; border: 1px solid #292929; background: linear-gradient(#888 50%, #333 50%); }
.blendrow { height: 28px; border-bottom: 1px solid #3c3c3c; display: flex; align-items: center; padding: 0 4px 2px; }
.pass { width: 111px; letter-spacing: .15px; } .op { margin-left: 6px; width: 44px; }
.combo { display: flex; width: 52px; height: 19px; border: 1px solid #2e2e2e; }
.combo b { width: 32px; background: #3a3a3a; text-align: center; font: 10.500px/17px "Liberation Sans", Arial, sans-serif; letter-spacing: -.3px; }
.combo i { flex: 1; display: flex; align-items: center; justify-content: center; background: #626262; }
.lockrow { height: 29px; display: flex; align-items: center; padding: 0 0 2px 5px; border-bottom: 1px solid #3c3c3c; }
.lockrow > * { flex: none; }
.lk { width: 34px; } .k2 { margin-left: 10px; } .k3 { margin-left: 7px; } .k4 { margin-left: 10px; }
.fl { width: 22px; margin-left: 26px; }
.listwrap { display: flex; height: 303px; background: #464646; }
.list { width: 205px; }
.row { height: 23px; display: flex; align-items: center; border-bottom: 1px solid #343434; background: #535353; }
.row > * { flex: none; }
.row.tall { height: 39px; } .row.bgrow { height: 40px; }
.row.sel { background: linear-gradient(90deg, #535353 30px, #596678 30px); }
.eye { width: 31px; height: 100%; display: flex; align-items: center; justify-content: center; border-right: 1px solid #393939; }
.redbg { background: #b24343; } .orangebg { background: #a7650e; }
.tri { width: 0; height: 0; margin: 0 6px 0 5px; border: 4.500px solid transparent; border-left: 6px solid #eee; border-right: 0; }
.row .nm { margin-left: 11px; padding-top: 3px; letter-spacing: .08px; }
.row .n-cases { letter-spacing: 0; }
.smart { margin-left: 4px; } .row .n-logo { margin-left: 8px; padding-top: 3px; letter-spacing: .4px; }
.warn { margin-left: 11px; }
.row .n-photo { margin-left: 11px; letter-spacing: .15px; }
.pic { width: 12px; height: 33px; margin-left: 3px; background: #fff; border: 1px solid #111; }
.row .n-bg { width: 121px; font-style: italic; letter-spacing: -.7px; }
.listscroll { flex: 1; background: linear-gradient(90deg, #383838, #424242); }
.lfoot { height: 20px; border-top: 1px solid #303030; background: #535353; }
```
